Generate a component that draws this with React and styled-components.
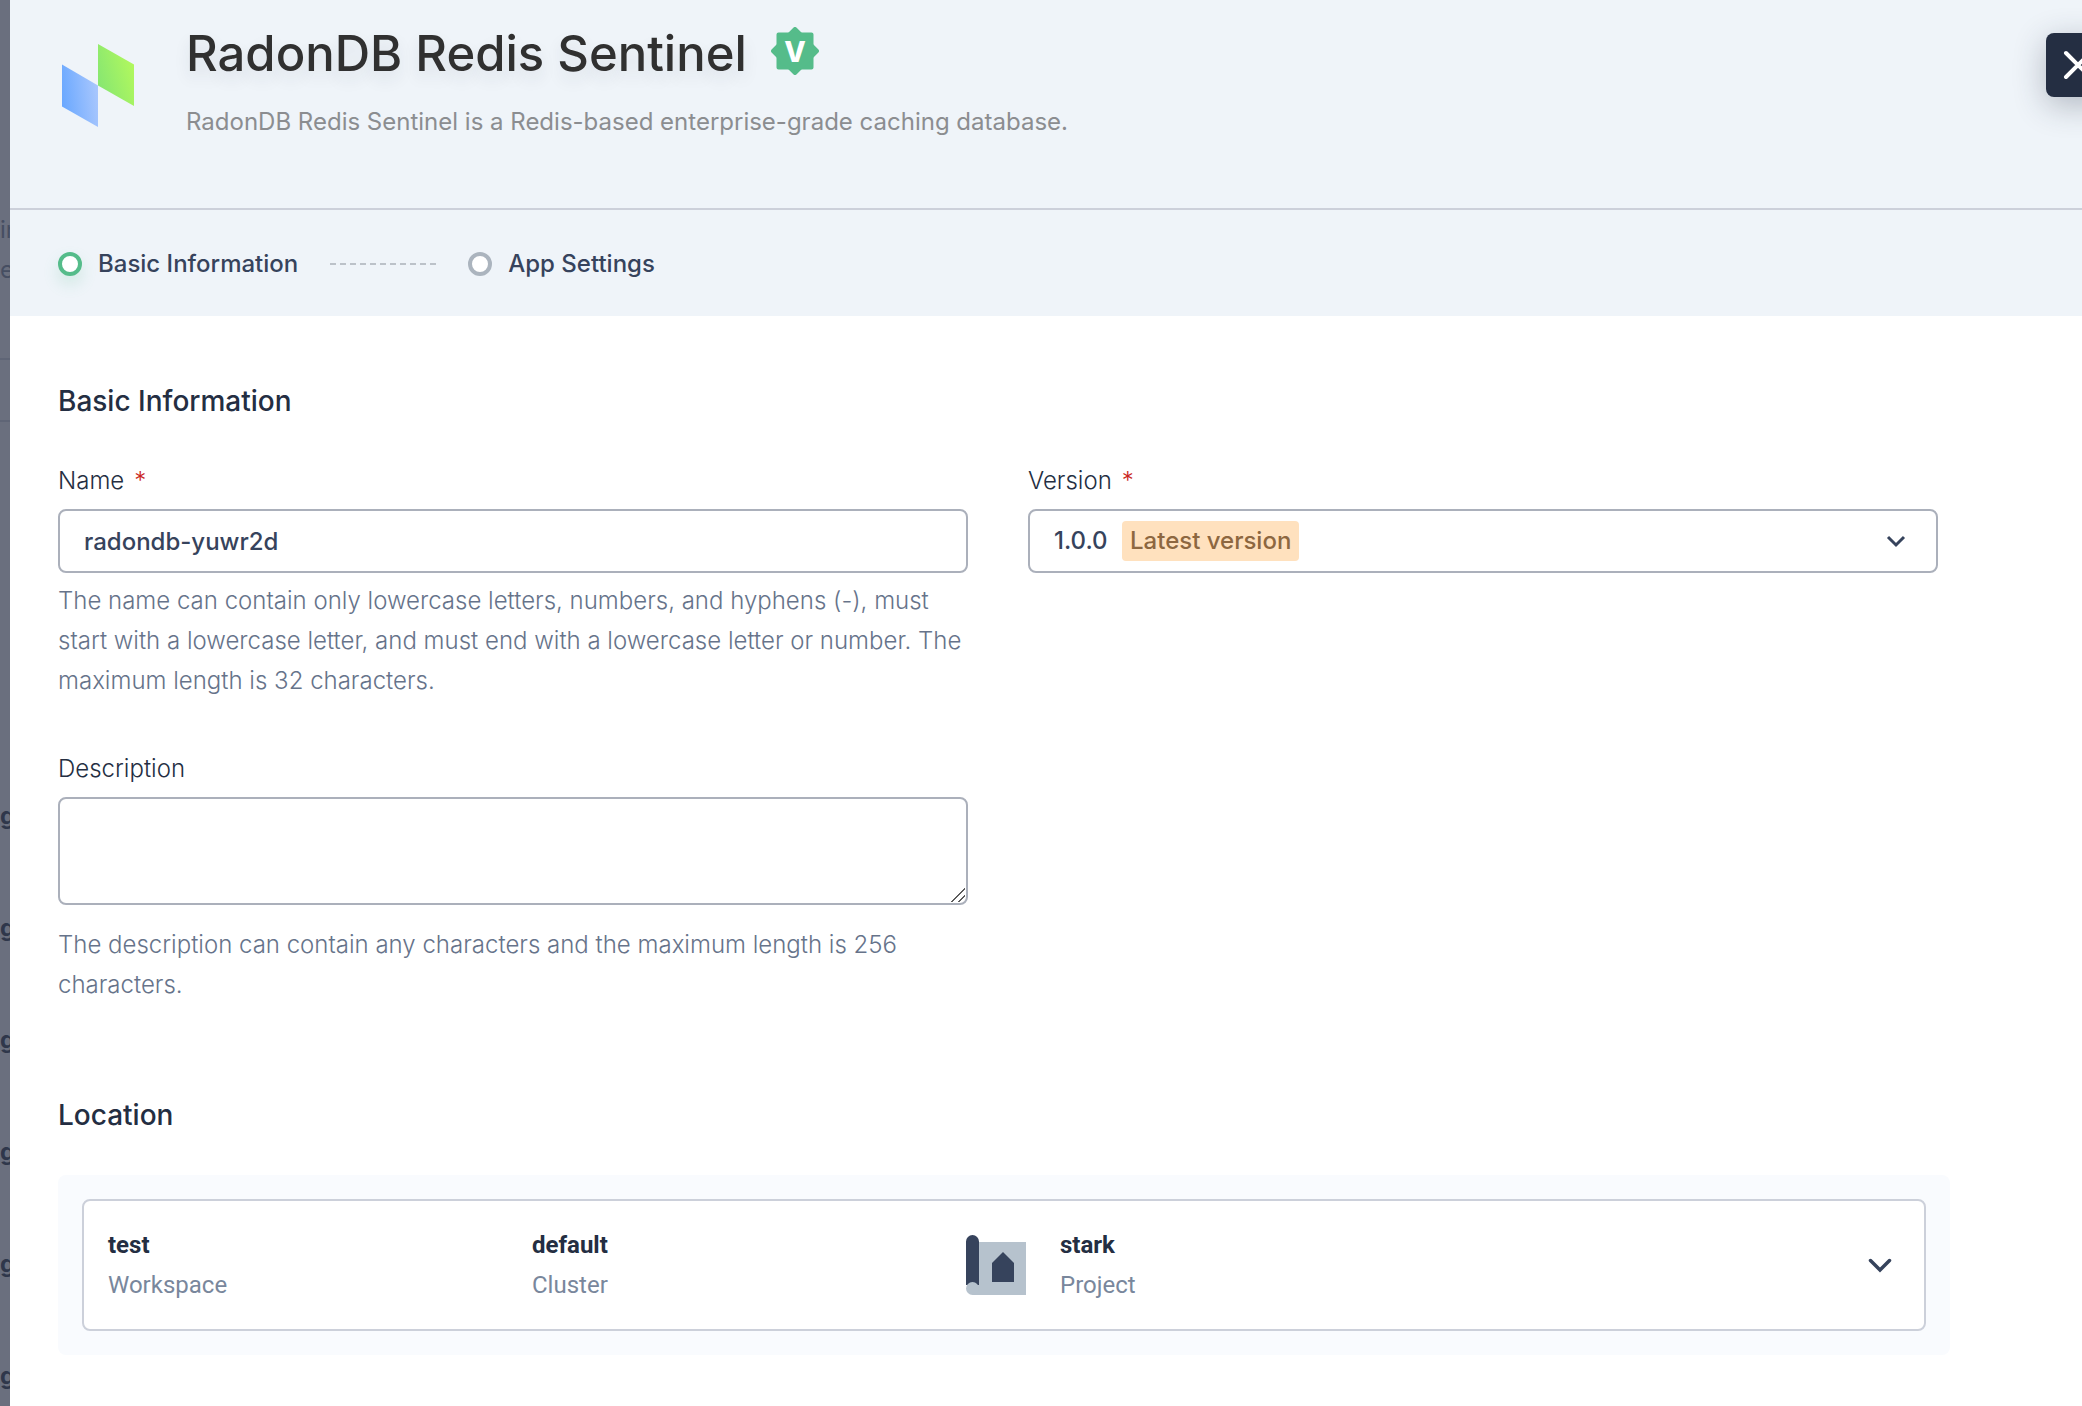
import React, { useState } from "react";
import styled, { createGlobalStyle, css } from "styled-components";

const GlobalStyle = createGlobalStyle`
  *, *::before, *::after { box-sizing: border-box; }
  body {
    margin: 0;
    background: #ffffff;
    font-family: Inter, "Liberation Sans", sans-serif;
    font-size: 24px;
    color: #242e42;
  }
  h1, h2, p { margin: 0; }
`;

const Shell = styled.div`
  display: flex;
  min-height: 100vh;
  overflow: hidden;
`;

const Behind = styled.aside`
  flex: 0 0 10px;
  height: 100vh;
  overflow: hidden;
  padding-top: 210px;
  background: #6a6f7e;
`;

const BehindText = styled.p`
  height: 148px;
  line-height: 40px;
  font-weight: 400;
  color: #464e62;
  white-space: pre;
`;

const BehindToolbar = styled.div`
  height: 64px;
  margin-bottom: 338px;
  border-top: 2px solid #5f6576;
  border-bottom: 2px solid #5f6576;
`;

const BehindRow = styled.div`
  height: 112px;
  line-height: 112px;
  font-weight: 700;
  color: #2f374b;
`;

const Panel = styled.main`
  position: relative;
  flex: 1;
  min-width: 0;
  background: #ffffff;
`;

const Header = styled.header`
  display: flex;
  gap: 48px;
  padding: 22px 132px 70px 48px;
  background: #eff4f9;
  border-bottom: 2px solid #ccd0da;
`;

const Logo = styled.svg`
  flex: none;
  width: 80px;
  height: 84px;
  margin-top: 22px;
`;

const TitleRow = styled.div`
  display: flex;
  align-items: center;
  gap: 24px;
`;

const Title = styled.h1`
  font-size: 49px;
  line-height: 64px;
  font-weight: 500;
  color: #303030;
  text-shadow: 0 8px 16px rgba(36, 46, 66, 0.1);
`;

const Badge = styled.svg`
  width: 48px;
  height: 48px;
  margin-bottom: 6px;
  font: 800 28px Inter, sans-serif;
`;

const Subtitle = styled.p`
  margin-top: 20px;
  line-height: 32px;
  font-weight: 400;
  color: #8b8d90;
`;

const CloseButton = styled.button`
  position: absolute;
  top: 33px;
  right: -28px;
  display: flex;
  align-items: center;
  justify-content: center;
  width: 64px;
  height: 64px;
  padding: 0;
  border: 0;
  border-radius: 8px;
  background: #242e42;
  box-shadow: 0 8px 32px rgba(36, 46, 66, 0.3);
  cursor: pointer;
`;

const Steps = styled.ol`
  display: flex;
  align-items: center;
  gap: 32px;
  margin: 0;
  padding: 38px 48px 36px;
  list-style: none;
  background: #eff4f9;
`;

const Step = styled.li`
  display: flex;
  align-items: center;
  gap: 16px;
  line-height: 32px;
  font-weight: 500;
  color: #36435c;
`;

const StepDot = styled.span`
  width: 24px;
  height: 24px;
  border: 4px solid #abb4be;
  border-radius: 50%;
  background: #ffffff;
  ${({ $active }) =>
    $active &&
    css`
      border-color: #55bc8a;
      box-shadow: 0 8px 16px rgba(85, 188, 138, 0.2);
    `}
`;

const StepLine = styled.svg`
  width: 106px;
  height: 2px;
`;

const Body = styled.div`
  padding: 65px 132px 48px 48px;
`;

const Section = styled.section`
  & + & {
    margin-top: 90px;
  }
`;

const SectionTitle = styled.h2`
  margin-bottom: 40px;
  font-size: 28px;
  line-height: 40px;
  font-weight: 500;
`;

const FormGrid = styled.div`
  display: grid;
  grid-template-columns: repeat(2, minmax(0, 1fr));
  gap: 48px 60px;
  padding-right: 12px;
`;

const Field = styled.div`
  grid-column: ${({ $column }) => $column};
`;

const Label = styled.label`
  display: flex;
  gap: 10px;
  margin-bottom: 8px;
  line-height: 40px;
  font-weight: 300;
  color: #242e42;
`;

const Required = styled.span`
  color: #ca2621;
`;

const control = css`
  display: block;
  width: 100%;
  border: 2px solid #abb0bb;
  border-radius: 8px;
  background: #ffffff;
  font: 500 24px/32px Inter, "Liberation Sans", sans-serif;
  color: #36435c;
  outline: none;
`;

const TextInput = styled.input`
  ${control}
  height: 64px;
  padding: 0 24px;
`;

const TextArea = styled.textarea`
  ${control}
  height: 108px;
  padding: 12px 24px;
  resize: vertical;

  &::-webkit-resizer {
    background: linear-gradient(
        135deg,
        transparent 50%,
        #5c5c5c 50% 57%,
        transparent 57% 74%,
        #5c5c5c 74% 81%,
        transparent 81%
      )
      0 0 / 14px 14px no-repeat;
  }
`;

const SelectBox = styled.div`
  position: relative;
`;

const Select = styled.select`
  ${control}
  height: 64px;
  padding: 0 24px;
  appearance: none;
`;

const SelectTag = styled.span`
  position: absolute;
  top: 12px;
  left: 94px;
  padding: 0 8px;
  border-radius: 4px;
  background: #ffe1be;
  font-weight: 500;
  line-height: 40px;
  color: #8d6740;
  pointer-events: none;
`;

const SelectArrow = styled.svg`
  position: absolute;
  top: 20px;
  right: 30px;
  width: 24px;
  height: 24px;
  pointer-events: none;
`;

const Hint = styled.p`
  margin-top: ${({ $gap }) => $gap}px;
  line-height: 40px;
  font-weight: 300;
  color: #66738a;
`;

const LocationPanel = styled.div`
  padding: 24px;
  border-radius: 8px;
  background: #f9fbfe;
`;

const LocationCard = styled.button`
  display: grid;
  grid-template-columns: minmax(0, 424fr) minmax(0, 432fr) minmax(0, 896fr) 40px;
  align-items: center;
  width: 100%;
  padding: 24px;
  border: 2px solid #ccd0da;
  border-radius: 8px;
  background: #ffffff;
  font: 400 24px/40px Roboto, "Liberation Sans", sans-serif;
  text-align: left;
  cursor: pointer;
`;

const LocationItem = styled.span`
  display: flex;
  align-items: center;
  gap: 32px;
`;

const ItemText = styled.span`
  display: flex;
  flex-direction: column;
`;

const ItemName = styled.span`
  font-weight: 700;
  color: #242e42;
`;

const ItemKind = styled.span`
  color: #79879c;
`;

const ProjectIcon = styled.svg`
  flex: none;
  width: 64px;
  height: 64px;
`;

const CardArrow = styled.svg`
  justify-self: center;
  width: 28px;
  height: 28px;
`;

const behindRows = ["g", "g", "g", "g", "g", "g"];

function Location({ name, kind, icon }) {
  return (
    <LocationItem>
      {icon}
      <ItemText>
        <ItemName>{name}</ItemName>
        <ItemKind>{kind}</ItemKind>
      </ItemText>
    </LocationItem>
  );
}

export default function App() {
  const [name, setName] = useState("radondb-yuwr2d");

  return (
    <>
      <GlobalStyle />
      <Shell>
        <Behind aria-hidden="true">
          <BehindText>{"in\ne"}</BehindText>
          <BehindToolbar />
          {behindRows.map((text, index) => (
            <BehindRow key={index}>{text}</BehindRow>
          ))}
        </Behind>

        <Panel>
          <Header>
            <Logo viewBox="0 0 80 84" aria-hidden="true">
              <defs>
                <linearGradient id="logoBlue" x1="0" y1="0.6" x2="1" y2="0.4">
                  <stop offset="0" stopColor="#6aa8ff" />
                  <stop offset="1" stopColor="#a9c7fd" />
                </linearGradient>
                <linearGradient id="logoGreen" x1="0" y1="0.7" x2="1" y2="0.2">
                  <stop offset="0" stopColor="#86e672" />
                  <stop offset="1" stopColor="#b4f95c" />
                </linearGradient>
              </defs>
              <path d="M4 20.500L40 41.500V83L4 62.500Z" fill="url(#logoBlue)" />
              <path d="M40 0L76 20.500V62L40 41.500Z" fill="url(#logoGreen)" />
            </Logo>
            <div>
              <TitleRow>
                <Title>RadonDB Redis Sentinel</Title>
                <Badge viewBox="0 0 48 48" role="img" aria-label="Verified">
                  <g fill="#55bc8a" stroke="#55bc8a" strokeWidth="4" strokeLinejoin="round">
                    <path d="M7.500 7.500H40.500V40.500H7.500Z" />
                    <path d="M24 2L46 24L24 46L2 24Z" />
                  </g>
                  <text x="24" y="35" textAnchor="middle" fill="#ffffff">
                    V
                  </text>
                </Badge>
              </TitleRow>
              <Subtitle>
                RadonDB Redis Sentinel is a Redis-based enterprise-grade caching database.
              </Subtitle>
            </div>
          </Header>

          <Steps>
            <Step>
              <StepDot $active />
              Basic Information
            </Step>
            <StepLine aria-hidden="true">
              <path d="M0 1H106" stroke="#bcc2c9" strokeWidth="2" strokeDasharray="6 4" />
            </StepLine>
            <Step>
              <StepDot />
              App Settings
            </Step>
          </Steps>

          <Body>
            <Section>
              <SectionTitle>Basic Information</SectionTitle>
              <FormGrid>
                <Field $column={1}>
                  <Label htmlFor="app-name">
                    Name <Required>*</Required>
                  </Label>
                  <TextInput
                    id="app-name"
                    type="text"
                    value={name}
                    spellCheck={false}
                    onChange={(event) => setName(event.target.value)}
                  />
                  <Hint $gap={8}>
                    The name can contain only lowercase letters, numbers, and hyphens (-), must
                    start with a lowercase letter, and must end with a lowercase letter or number.
                    The maximum length is 32 characters.
                  </Hint>
                </Field>
                <Field $column={2}>
                  <Label htmlFor="app-version">
                    Version <Required>*</Required>
                  </Label>
                  <SelectBox>
                    <Select id="app-version" defaultValue="1.0.0">
                      <option value="1.0.0">1.0.0</option>
                    </Select>
                    <SelectTag>Latest version</SelectTag>
                    <SelectArrow viewBox="0 0 24 24" aria-hidden="true">
                      <path d="M4 8L12 16L20 8" fill="none" stroke="#36435c" strokeWidth="3" />
                    </SelectArrow>
                  </SelectBox>
                </Field>
                <Field $column={1}>
                  <Label htmlFor="app-description">Description</Label>
                  <TextArea id="app-description" />
                  <Hint $gap={20}>
                    The description can contain any characters and the maximum length is 256
                    characters.
                  </Hint>
                </Field>
              </FormGrid>
            </Section>

            <Section>
              <SectionTitle>Location</SectionTitle>
              <LocationPanel>
                <LocationCard type="button">
                  <Location name="test" kind="Workspace" />
                  <Location name="default" kind="Cluster" />
                  <Location
                    name="stark"
                    kind="Project"
                    icon={
                      <ProjectIcon viewBox="0 0 64 64" aria-hidden="true">
                        <path d="M8.500 9H62V62H8.500Z" fill="#b6c2cd" />
                        <path d="M2 8.500a6.500 6.500 0 0 1 13 0V52H2Z" fill="#36435c" />
                        <circle cx="8.500" cy="55.500" r="6.500" fill="#b6c2cd" />
                        <path d="M28 30L39 19L50 30V49H28Z" fill="#36435c" />
                      </ProjectIcon>
                    }
                  />
                  <CardArrow viewBox="0 0 28 28" aria-hidden="true">
                    <path
                      d="M4.500 9.500L14 19L23.500 9.500"
                      fill="none"
                      stroke="#36435c"
                      strokeWidth="3.500"
                      strokeLinecap="round"
                    />
                  </CardArrow>
                </LocationCard>
              </LocationPanel>
            </Section>
          </Body>

          <CloseButton type="button" aria-label="Close">
            <svg width="32" height="32" viewBox="0 0 32 32" aria-hidden="true">
              <path
                d="M4 4L28 28M28 4L4 28"
                stroke="#ffffff"
                strokeWidth="4"
                strokeLinecap="round"
              />
            </svg>
          </CloseButton>
        </Panel>
      </Shell>
    </>
  );
}
